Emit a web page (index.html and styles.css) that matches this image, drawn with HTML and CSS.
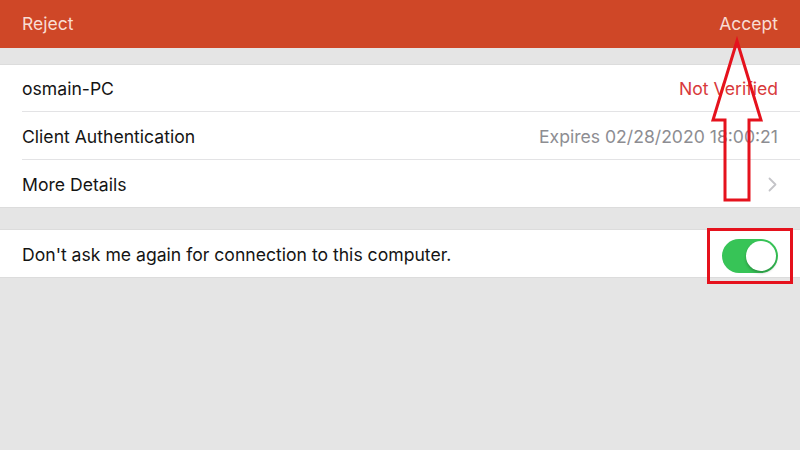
FILE: index.html
```html
<!DOCTYPE html>
<html>
<head>
<meta charset="utf-8">
<link rel="stylesheet" href="styles.css">
</head>
<body>
<div class="page">
  <header class="topbar">
    <span class="action">Reject</span>
    <span class="action">Accept</span>
  </header>
  <section class="group first">
    <div class="row">
      <span class="label">osmain-PC</span>
      <span class="value bad">Not Verified</span>
    </div>
    <div class="row">
      <span class="label">Client Authentication</span>
      <span class="value">Expires 02/28/2020 18:00:21</span>
    </div>
    <div class="row">
      <span class="label">More Details</span>
      <svg class="chevron" width="9" height="15" viewBox="0 0 9 15"><path d="M1.5 1.5 L7.5 7.5 L1.5 13.5" fill="none" stroke="#c4c4c8" stroke-width="1.8" stroke-linecap="round" stroke-linejoin="round"/></svg>
    </div>
  </section>
  <section class="group second">
    <div class="row">
      <span class="label">Don't ask me again for connection to this computer.</span>
      <span class="toggle"><span class="knob"></span></span>
    </div>
  </section>
  <svg class="annot" width="800" height="450" viewBox="0 0 800 450">
    <polygon points="737,41 761,120 749,120 749,200 725,200 725,120 713,120" fill="none" stroke="#e5121d" stroke-width="3" stroke-linejoin="miter"/>
    <rect x="708.5" y="229.5" width="83" height="53" fill="none" stroke="#e5121d" stroke-width="3"/>
  </svg>
</div>
</body>
</html>
```
FILE: styles.css
```css
html, body {
  margin: 0;
  padding: 0;
}
body {
  background: #e5e5e5;
  font-family: Inter, "Liberation Sans", Arial, sans-serif;
  width: 800px;
  height: 450px;
  overflow: hidden;
}
.page {
  position: relative;
  width: 800px;
  height: 450px;
}
.topbar {
  height: 48px;
  background: #cf4727;
  display: flex;
  align-items: center;
  justify-content: space-between;
  padding: 0 22px 1px 22px;
  box-sizing: border-box;
}
.action {
  color: #f8ddd3;
  font-size: 17.5px;
}
.group {
  background: #ffffff;
  border-top: 1px solid #dcdcdc;
  border-bottom: 1px solid #dcdcdc;
}
.group.first {
  margin-top: 16px;
}
.group.second {
  margin-top: 21px;
}
.row {
  height: 48px;
  margin-left: 22px;
  padding-right: 22px;
  padding-top: 1px;
  display: flex;
  align-items: center;
  justify-content: space-between;
  box-sizing: border-box;
  border-bottom: 1px solid #e3e3e5;
}
.group.first .row:first-child {
  height: 47px;
}
.row:last-child {
  border-bottom: none;
  height: 47px;
}
.label {
  font-size: 17.6px;
  color: #141414;
}
.value {
  font-size: 17.6px;
  color: #8d8d92;
}
.value.bad {
  color: #d8393b;
}
.chevron {
  margin-right: 1px;
}
.toggle {
  width: 56px;
  height: 34px;
  border-radius: 17px;
  background: #37c457;
  position: relative;
  margin-right: 0;
  margin-top: 3px;
}
.knob {
  position: absolute;
  right: 2px;
  top: 2px;
  width: 30px;
  height: 30px;
  border-radius: 50%;
  background: #ffffff;
  box-shadow: 0 2px 3px rgba(0,0,0,0.25);
}
.annot {
  position: absolute;
  left: 0;
  top: 0;
  pointer-events: none;
}
```
